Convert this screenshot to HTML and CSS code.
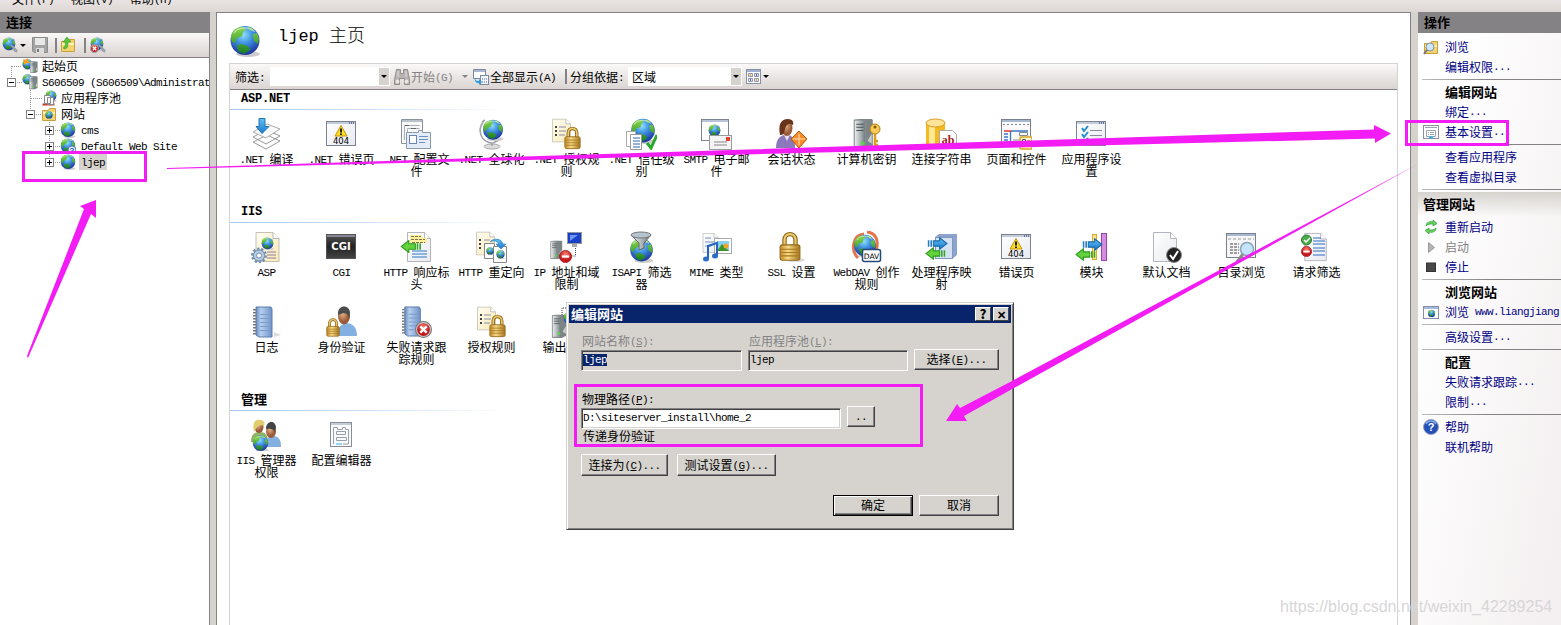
FILE: index.html
```html
<!DOCTYPE html>
<html lang="zh-CN">
<head>
	<meta charset="utf-8">
	<title>ljep 主页</title>
	<link rel="stylesheet" href="styles.css">
</head>
<body>

<!-- icon set -->
<svg class="defs" width="0" height="0">
	<defs>
		<radialGradient id="sea" cx="45%" cy="30%" r="70%"><stop offset="0" stop-color="#8fe0f8"/><stop offset=".45" stop-color="#3d8fe0"/><stop offset="1" stop-color="#1c329c"/></radialGradient>
		<linearGradient id="land" x2="0" y2="1"><stop offset="0" stop-color="#8ad84c"/><stop offset="1" stop-color="#167c24"/></linearGradient>
		<linearGradient id="gold" x2="1" y2="0"><stop offset="0" stop-color="#c48a28"/><stop offset=".4" stop-color="#f6dc88"/><stop offset="1" stop-color="#a8741c"/></linearGradient>
		<linearGradient id="steel" x2="1" y2="0"><stop offset="0" stop-color="#eef0f0"/><stop offset=".5" stop-color="#b4babc"/><stop offset="1" stop-color="#6c7478"/></linearGradient>
		<linearGradient id="page" x2="1" y2="1"><stop offset="0" stop-color="#fff"/><stop offset="1" stop-color="#e9eaf0"/></linearGradient>
		<linearGradient id="cream" x2="1" y2="1"><stop offset="0" stop-color="#fffef4"/><stop offset="1" stop-color="#f9e9b4"/></linearGradient>
		<linearGradient id="book" x2="1" y2="0"><stop offset="0" stop-color="#668cc0"/><stop offset=".3" stop-color="#b8d0ee"/><stop offset="1" stop-color="#6e94c8"/></linearGradient>
		<linearGradient id="blue" x2="0" y2="1"><stop offset="0" stop-color="#62c0f4"/><stop offset="1" stop-color="#1878cc"/></linearGradient>
		<linearGradient id="black" x2="0" y2="1"><stop offset="0" stop-color="#555"/><stop offset=".5" stop-color="#222"/><stop offset="1" stop-color="#444"/></linearGradient>
		<radialGradient id="red" cy="30%"><stop offset="0" stop-color="#f88070"/><stop offset="1" stop-color="#c4161c"/></radialGradient>
		<radialGradient id="head" cx="40%" cy="35%"><stop offset="0" stop-color="#e8b488"/><stop offset="1" stop-color="#985a38"/></radialGradient>
	</defs>

	<symbol id="globe" viewBox="0 0 32 32">
		<ellipse cx="19" cy="29" rx="12" ry="3" fill="#ccc"/>
		<circle cx="16" cy="15.500" r="14.500" fill="url(#sea)"/>
		<path d="M2 13C2 7 6 2 13 2l4 2-3 3-1 4-5 2-2 5-3-1zM18 2c3 0 5 1 7 3l-3 1zM24 9l4-1 2 6-1 5-4-3-1-4zM8 20l5-1 7 3 1 3-6 4-6-3z" fill="url(#land)"/>
		<path d="M5 8C9 2 20 1 26 7" stroke="#fff" stroke-width="1.500" fill="none" opacity=".45"/>
	</symbol>
	<symbol id="lock" viewBox="0 0 20 28">
		<path d="M5 14V8c0-7 10-7 10 0v6" fill="none" stroke="#8c6414" stroke-width="4"/>
		<path d="M5 14V8c0-7 10-7 10 0v6" fill="none" stroke="#eacb70" stroke-width="2"/>
		<rect x="1" y="12.500" width="18" height="14" rx="2" fill="url(#gold)" stroke="#96691a"/>
		<path d="M2 16.500h16M2 19.500h16M2 22.500h16" stroke="#a9781f"/>
	</symbol>
	<symbol id="window" viewBox="0 0 32 32">
		<rect x="1.500" y="3.500" width="29" height="24" fill="url(#page)" stroke="#7c8494"/>
		<path d="M2 5h28" stroke="#c4ccda" stroke-width="2"/><path d="M24 5h1m1 0h1m1 0h1" stroke="#445a90" stroke-width="1.500"/>
	</symbol>
	<symbol id="sheet" viewBox="0 0 26 32">
		<path d="M1.500 1.500h17l6 6v23h-23z" fill="url(#page)" stroke="#b4b4bc"/><path d="M18.500 1.500v6h6" fill="#fff" stroke="#b4b4bc"/>
	</symbol>
	<symbol id="creamsheet" viewBox="0 0 26 32">
		<path d="M1.500 1.500h17l6 6v23h-23z" fill="url(#cream)" stroke="#c4bfae"/><path d="M18.500 1.500v6h6" fill="#fff" stroke="#b4b4bc"/>
	</symbol>
	<symbol id="server" viewBox="0 0 20 30">
		<path d="M1 2l5-1h12l1 1v25l-6 3H1z" fill="#7c8486"/><rect x="1" y="2" width="11" height="27" fill="url(#steel)" stroke="#868e90"/>
		<path d="M3 6h7M3 9h7M3 12h7" stroke="#4a5458"/><path d="M14 22l4-7v10z" fill="#c8cccc"/><rect x="8" y="23" width="3" height="3" fill="#4ce038"/>
	</symbol>
	<symbol id="stop" viewBox="0 0 14 14"><circle cx="7" cy="7" r="6.500" fill="url(#red)" stroke="#a42020"/><path d="M3 7h8" stroke="#fff" stroke-width="2.500"/></symbol>
	<symbol id="cross" viewBox="0 0 16 16"><circle cx="8" cy="8" r="7.500" fill="#c8c8c8" stroke="#777"/><circle cx="8" cy="8" r="6" fill="url(#red)"/><path d="M5 5l6 6m0-6l-6 6" stroke="#fff" stroke-width="2.200"/></symbol>
	<symbol id="toright" viewBox="0 0 20 12"><path d="M6 3.500h6v-3l7 5.500-7 5.500v-3H6z" fill="url(#blue)" stroke="#1767a8"/><path d="M1.500 3v6M4 3v6" stroke="#247cc4" stroke-width="1.500"/></symbol>
	<symbol id="toleft" viewBox="0 0 20 12"><path d="M14 3.500H8v-3L1 6l7 5.500v-3h6z" fill="#64d23c" stroke="#2c9a1c"/><path d="M16 3v6M18.500 3v6" stroke="#37a824" stroke-width="1.500"/></symbol>

	<symbol id="i-compile" viewBox="0 0 32 32">
		<path d="M3 24l14-7 13 6-14 8zM3 19l14-7 13 6-14 8z" fill="#fff" stroke="#999"/>
		<path d="M3 14l14-8 13 5-14 9z" fill="#fafafa" stroke="#aaa"/>
		<path d="M9 .500h6v8h4l-7 7-6-7h3z" fill="url(#blue)" stroke="#2474b4"/>
	</symbol>
	<symbol id="i-404" viewBox="0 0 32 32">
		<use href="#window"/><path d="M16 7.500l6 10.500H10z" fill="#ffdc28" stroke="#c49408" stroke-linejoin="round"/><path d="M16 10.500v4m0 1V17" stroke="#222" stroke-width="2"/>
		<text x="16" y="26" class="t404">404</text>
	</symbol>
	<symbol id="i-config" viewBox="0 0 32 32">
		<path d="M1.500 1.500h21v24h-21z" fill="#f8f8f8" stroke="#8c929c"/><path d="M2 3h20" stroke="#b8c0cc" stroke-width="2"/><path d="M4.500 22V7.500h15M7.500 22V10.500h12" fill="none" stroke="#a8b0bc"/><path d="M5 7.500h4M11 10.500h5" stroke="#666"/>
		<path d="M12.500 14.500h6v-2h4v2h8v16H6.500v-16z" fill="#e4ecf8" stroke="#8c98ac"/><rect x="9.500" y="17.500" width="7" height="8" fill="#fff" stroke="#6484bc"/><path d="M19 18.500h9M19 21.500h9M19 24.500h6" stroke="#7090c4"/>
	</symbol>
	<symbol id="i-world" viewBox="0 0 32 32">
		<ellipse cx="17" cy="28.500" rx="8" ry="2.500" fill="#dcdcdc" stroke="#aaa"/><path d="M8 4C2 13 6 24 17 25v3M7 4l3-2M24 22l-6 3" fill="none" stroke="#a0a4a8" stroke-width="1.600"/>
		<use href="#globe" x="7" y="1" width="22" height="22"/>
	</symbol>
	<symbol id="i-auth" viewBox="0 0 32 32">
		<use href="#creamsheet" x="1" y="0" width="21" height="25"/><path d="M9 9h7M9 13h7M9 17h6" stroke="#8c8cac"/><path d="M5 9h2M5 13h2M5 17h2" stroke="#444" stroke-width="2"/>
		<use href="#lock" x="14" y="8" width="17" height="24"/>
	</symbol>
	<symbol id="i-trust" viewBox="0 0 32 32">
		<use href="#globe" x="5" y="0" width="26" height="26"/><path d="M1.500 13.500h9v15h-9z" fill="#fff" stroke="#aaa"/><path d="M5.500 16.500h11v15h-11z" fill="#fff" stroke="#999"/><path d="M8 20h7m-7 3h7m-7 3h7m-7 3h7" stroke="#2868b8"/>
		<path d="M22 25l4 5 6-13" fill="none" stroke="#2ca82c" stroke-width="3"/>
	</symbol>
	<symbol id="i-smtp" viewBox="0 0 32 32">
		<rect x="1.500" y="1.500" width="27" height="21" fill="#fff" stroke="#7c8494"/><path d="M2 3h26" stroke="#b8c4d8" stroke-width="2"/><use href="#globe" x="8" y="6" width="13" height="13"/>
		<rect x="9.500" y="17.500" width="22" height="14" fill="#f4f4f4" stroke="#999"/><path d="M14 24h13m-13 3h13" stroke="#888"/><rect x="26" y="19" width="4" height="4" fill="#e44030"/>
	</symbol>
	<symbol id="i-session" viewBox="0 0 32 32">
		<path d="M1 30c0-9 4-12 8-13h5c5 2 6 6 6 13z" fill="#8c78bc"/><path d="M9 17l3 6 3-6z" fill="#e8e0f4"/><ellipse cx="12" cy="10" rx="5.500" ry="8" fill="url(#head)"/><path d="M5 17C3 6 6 1 13 1c5 0 6 4 5 6-4-3-7 0-8 4-1 5-2 6-5 6z" fill="#68341c"/>
		<path d="M24 13l8 8-8 9-8-9z" fill="#f88c28" stroke="#bc5408"/><path d="M24 16v11M18 21h12" stroke="#ffe4b8"/>
	</symbol>
	<symbol id="i-key" viewBox="0 0 32 32">
		<use href="#server" x="3" y="0" width="21" height="31"/><circle cx="25" cy="11" r="5" fill="#f8cc58" stroke="#b87c10"/><circle cx="25" cy="9" r="1.500" fill="#845808"/><path d="M25 15v14m0-6h3m-3 4h3" stroke="#d89c24" stroke-width="2.500"/>
	</symbol>
	<symbol id="i-conn" viewBox="0 0 32 32">
		<path d="M1 5v23c0 4 19 4 19 0V5z" fill="#f8b820"/><path d="M4 7v22c2 1 4 2 6 2V8z" fill="#ffe898"/><ellipse cx="10.500" cy="5" rx="9.500" ry="4" fill="#ffe498" stroke="#d89c20"/>
		<path d="M14.500 12.500h13l4 4v14h-17z" fill="#fff" stroke="#aaa"/><text x="23" y="26" class="tab">ab</text>
	</symbol>
	<symbol id="i-pages" viewBox="0 0 32 32">
		<rect x="1.500" y="1.500" width="29" height="27" fill="#fafafa" stroke="#788090"/><path d="M2 3h28" stroke="#a8b8d0" stroke-width="2"/><path d="M3 6.500h26" stroke="#888" stroke-dasharray="2 2"/><path d="M4 13h8" stroke="#e43030" stroke-width="1.500"/><path d="M12 13h16M10.500 13v15M4 16h4m-4 3h4m-4 3h4" stroke="#3878cc" stroke-width="1.300"/><path d="M13 22h6m-6 3h6M19.500 14.500h8v3h-8z" fill="none" stroke="#888"/>
		<rect x="20" y="19" width="12" height="12" rx="1" fill="#fff8d0" stroke="#d8a820" stroke-width="1.500"/><path d="M22.500 21.500h3v5h-3zM27 23h3" fill="none" stroke="#555"/>
	</symbol>
	<symbol id="i-settings" viewBox="0 0 32 32"><use href="#window"/><path d="M7 10l2 3 4-5M7 16l2 3 4-5M7 22l2 3 4-5" fill="none" stroke="#2890d0" stroke-width="2"/><path d="M15 12.500h12m-12 5h12m-12 6h12" stroke="#888c98"/></symbol>

	<symbol id="i-asp" viewBox="0 0 32 32">
		<use href="#creamsheet" x="4.500" y="0" width="26" height="32"/><use href="#globe" x="11" y="6" width="13" height="13"/><path d="M17 21h9m-9 3h9m-9 3h9" stroke="#8c7c9c"/>
		<circle cx="9" cy="24.500" r="6.500" fill="#b4cce4" stroke="#7890ac" stroke-dasharray="2.200 1.800" stroke-width="3"/><circle cx="9" cy="24.500" r="5.500" fill="#b4cce4" stroke="#7890ac"/><circle cx="9" cy="24.500" r="2.500" fill="#fff" stroke="#7890ac"/>
	</symbol>
	<symbol id="i-cgi" viewBox="0 0 32 32"><rect x="1.500" y="3.500" width="29" height="24" fill="url(#black)" stroke="#555"/><path d="M2 5h28" stroke="#889" stroke-width="2"/><text x="16" y="19" class="tcgi">CGI</text></symbol>
	<symbol id="i-header" viewBox="0 0 32 32"><use href="#sheet" x="6" y="0" width="26" height="32"/><path d="M10 4h12v3h5v5H10z" fill="#fff09c"/><path d="M11 5.500h10M11 8.500h14M12 11.500h13" stroke="#7c7448" stroke-dasharray="3 1"/><path d="M12 20h15m-15 3h15m-15 3h15" stroke="#2878c8"/><use href="#toleft" x="0" y="9" width="22" height="13"/></symbol>
	<symbol id="i-redirect" viewBox="0 0 32 32"><use href="#creamsheet" x="0" y="0" width="21" height="25"/><path d="M9 9h6M9 13h4M9 17h3" stroke="#8c8cac"/><path d="M4 9h2M4 13h2M4 17h2" stroke="#444" stroke-width="2"/><path d="M9.500 12.500h10v15h-10z" fill="#fff" stroke="#888"/><path d="M18.500 15.500h13v16h-13z" fill="#fff" stroke="#888"/><use href="#globe" x="11" y="16" width="8" height="8"/><use href="#globe" x="21" y="19" width="9" height="9"/><path d="M15 11c4-5 12-3 13 2h3l-5 5-5-5h3c-2-3-5-4-9-2z" fill="url(#blue)" stroke="#1c70b4" stroke-width=".5"/></symbol>
	<symbol id="i-ip" viewBox="0 0 32 32"><use href="#server" x="0" y="9" width="13" height="19"/><rect x="17.500" y="1.500" width="14" height="11" fill="#1840c8" stroke="#999"/><path d="M20 4l8 0-8 6z" fill="#6c98f4"/><path d="M22 13h5v3h-5z" fill="#aaa"/><path d="M25.500 17v8H20" fill="none" stroke="#444" stroke-dasharray="1 1"/><use href="#stop" x="9" y="19" width="13" height="13"/></symbol>
	<symbol id="i-isapi" viewBox="0 0 32 32"><use href="#globe" x="4" y="7" width="25" height="25"/><path d="M6 4l8 8v7l5-2v-5l7-8z" fill="url(#steel)" stroke="#666"/><ellipse cx="16" cy="4" rx="10" ry="3" fill="#b4c4d0" stroke="#777"/></symbol>
	<symbol id="i-mime" viewBox="0 0 32 32"><use href="#sheet" x="2" y="0" width="17" height="24"/><path d="M5 7h6m-6 4h9m-9 4h6" stroke="#7494c4"/><rect x="14.500" y="7.500" width="17" height="15" fill="#fff" stroke="#aaa"/><path d="M17 10h12v10H17z" fill="#8cd0f0"/><path d="M17 20l5-7 7 7z" fill="#3c9428"/><circle cx="26" cy="15" r="2.500" fill="#f0a428"/><path d="M8 28V15l9-3v12" fill="none" stroke="#2464c0" stroke-width="2"/><ellipse cx="6" cy="28" rx="3" ry="2.500" fill="#2c6cc8"/><ellipse cx="15" cy="25" rx="3" ry="2.500" fill="#2c6cc8"/></symbol>
	<symbol id="i-ssl" viewBox="0 0 32 32"><ellipse cx="20" cy="29" rx="10" ry="2" fill="#ddd"/><use href="#lock" x="4" y="0" width="22" height="31"/></symbol>
	<symbol id="i-dav" viewBox="0 0 32 32"><path d="M8 27C0 19 3 4 14 3M17 1c12 1 12 15 7 20" fill="none" stroke="#e4744c" stroke-width="3"/><use href="#globe" x="3" y="3" width="24" height="24"/><rect x="12.500" y="18.500" width="18" height="12" rx="2" fill="#fff" stroke="#234a7a" stroke-width="1.500"/><text x="21.500" y="27.500" class="tdav">DAV</text></symbol>
	<symbol id="i-handler" viewBox="0 0 32 32"><path d="M10 6l4-3h18v21l-5 4H10z" fill="#8ca4cc"/><rect x="10.500" y="6.500" width="17" height="21" fill="#d4e2f4" stroke="#8098c0"/><use href="#toright" x="2" y="6" width="21" height="13"/><use href="#toleft" x="0" y="16" width="21" height="13"/></symbol>
	<symbol id="i-module" viewBox="0 0 32 32"><rect x="17.500" y="3.500" width="4" height="25" fill="#fce48c" stroke="#d8a830"/><rect x="26.500" y="2.500" width="5" height="27" fill="#d48ce0" stroke="#9c44ac"/><use href="#toright" x="7" y="7" width="21" height="13"/><use href="#toleft" x="0" y="17" width="21" height="13"/></symbol>
	<symbol id="i-default" viewBox="0 0 32 32"><use href="#sheet" x="2" y="0" width="26" height="32"/><circle cx="24" cy="24" r="7.500" fill="#222" stroke="#888"/><path d="M20 24l3 4 5-8" fill="none" stroke="#fff" stroke-width="2"/></symbol>
	<symbol id="i-browse" viewBox="0 0 32 32"><rect x="1.500" y="2.500" width="29" height="24" fill="#f6f6f8" stroke="#788090"/><path d="M2 4h28" stroke="#a8b8d0" stroke-width="2"/><path d="M3 8h26" stroke="#999" stroke-dasharray="3 2"/><path d="M5 13h9m-9 3h9m-9 3h9m-9 3h9" stroke="#444" stroke-dasharray="3 1"/><path d="M18 23l-6 8" stroke="#888" stroke-width="3"/><circle cx="22" cy="18" r="6.500" fill="#c4e4fc" stroke="#8ca4b8" stroke-width="1.500"/></symbol>
	<symbol id="i-request" viewBox="0 0 32 32"><use href="#sheet" x="3" y="1" width="25" height="30"/><path d="M13 7h8m-8 3h12m-12 3h12m-12 4h12m-12 3h12m-12 4h12" stroke="#2c6cc4"/><circle cx="6.500" cy="9" r="5" fill="#48ac48" stroke="#2c7c2c"/><path d="M4 9l2 2 4-4" stroke="#fff" stroke-width="1.500" fill="none"/><use href="#stop" x="1" y="15" width="11" height="11"/></symbol>
	<symbol id="i-log" viewBox="0 0 32 32"><path d="M24 26l7 3-7 2z" fill="#ddd"/><path d="M6 1h15l1 2v28H9l-3-2z" fill="url(#book)" stroke="#5c7cac"/><path d="M10 8.500h10m-10 4h10m-10 4h10m-10 4h10m-10 4h10" stroke="#7c9ccc"/><path d="M4.500 3v27" stroke="#777" stroke-width="3" stroke-dasharray="1.500 1.500"/></symbol>
	<symbol id="i-identity" viewBox="0 0 32 32"><path d="M12 30c0-9 5-12 9-13 7 0 11 5 11 13z" fill="#82b0e2"/><ellipse cx="19" cy="10" rx="6" ry="8.500" fill="url(#head)"/><path d="M13 9C12-2 25-2 25 7l-1 6c-1-6-4-7-11-4z" fill="#4c4c4c"/><use href="#lock" x="1" y="11" width="14" height="21"/></symbol>
	<symbol id="i-failed" viewBox="0 0 32 32"><use href="#i-log" x="-1" y="0" width="31" height="31"/><use href="#cross" x="15" y="15" width="17" height="17"/></symbol>
	<symbol id="i-output" viewBox="0 0 32 32"><use href="#server" x="1" y="8" width="17" height="24"/><path d="M12 9V2h12" fill="none" stroke="#444" stroke-dasharray="1 1"/><use href="#globe" x="13" y="5" width="15" height="15"/></symbol>
	<symbol id="i-users" viewBox="0 0 32 32"><path d="M1 23c0-8 4-10 9-10s8 3 8 10z" fill="#8cb464"/><ellipse cx="9" cy="8" rx="4.500" ry="6" fill="url(#head)"/><path d="M4 13C2 4 5 0 10 1c5 0 5 4 4 6-5-2-7 1-10 6z" fill="#e4cc70"/><path d="M15 28c0-9 4-11 8-11 6 0 8 4 8 11z" fill="#84b0e0"/><ellipse cx="21" cy="12" rx="5" ry="7" fill="url(#head)"/><path d="M16 10c0-9 10-9 10-1l-2 4c0-3-3-4-8-3z" fill="#444"/><use href="#globe" x="2" y="16" width="17" height="17"/></symbol>
	<symbol id="i-editor" viewBox="0 0 32 32"><rect x="5.500" y="3.500" width="21" height="24" fill="#fafbfc" stroke="#888c98"/><path d="M6 5h20" stroke="#c4ccd8" stroke-width="2"/><path d="M8.500 25V8.500h4v2h5v-2h3v2h3V25M11.500 12.500h9v3h-9zM11.500 18.500h10v3h-10z" fill="none" stroke="#98a0ac"/><path d="M11 25h6" stroke="#30b4e8"/><path d="M18 25h5" stroke="#999"/></symbol>

	<symbol id="s-connect" viewBox="0 0 16 16"><use href="#globe" width="14" height="14"/><path d="M9 8l5 5-2 1M11 11l4 4" fill="none" stroke="#98a0a8" stroke-width="2"/></symbol>
	<symbol id="s-save" viewBox="0 0 16 16"><path d="M.500 .500h15v15H2l-1.500-1.500z" fill="#a4a4a4" stroke="#8c8c8c"/><path d="M3 1h10v7H3z" fill="#e8e8e8"/><path d="M4 11h8v5H4z" fill="#ddd"/><path d="M5 12h2v3H5z" fill="#777"/></symbol>
	<symbol id="s-folder" viewBox="0 0 16 16"><path d="M1.500 4.500h6l1-2h6v12h-13z" fill="#f4d470" stroke="#c8a03c"/><path d="M2 7h12" stroke="#fff0b4" stroke-width="2"/></symbol>
	<symbol id="s-start" viewBox="0 0 16 16"><use href="#globe" x="0" y="1" width="11" height="11"/><path d="M1 1l3 1 2-2 0 3 3 2-4 0-3 2 0-3z" fill="#f8a420"/><use href="#server" x="8" y="2" width="8" height="14"/></symbol>
	<symbol id="s-pool" viewBox="0 0 16 16"><use href="#globe" x="4" y="0" width="12" height="12"/><path d="M1.500 14.500h12" stroke="#c83c34" stroke-width="2"/><path d="M3.500 5.500h6v8h-6zM6.500 7.500h6v7h-6z" fill="#fff" stroke="#888"/></symbol>
	<symbol id="s-binoc" viewBox="0 0 16 16"><path d="M2.500 .500h4v4h3v-4h4l1 5 1 5v5h-5v-6h-5v6h-5v-5l1-5z" fill="#b8b4b4" stroke="#908c8c"/><path d="M4 2v6M12 2v6" stroke="#e0dcdc"/><circle cx="3.500" cy="12.500" r="2" fill="#e8e4e4"/><circle cx="12.500" cy="12.500" r="2" fill="#e8e4e4"/></symbol>
	<symbol id="s-showall" viewBox="0 0 16 16"><path d="M.500 .500h12v9H.500z" fill="#fff" stroke="#7c88a0"/><path d="M1 2h11" stroke="#a8b8d0" stroke-width="2"/><rect x="7.500" y="6.500" width="8" height="9" fill="#f4f8ff" stroke="#7c88a0"/><path d="M9 10h5m-5 3h5" stroke="#3c60b0" stroke-dasharray="1 1"/><path d="M2 8c0 4 2 4 4 4v-2l3 3-3 3v-2c-3 0-5-2-4-6z" fill="#2c98e0"/></symbol>
	<symbol id="s-grid" viewBox="0 0 16 16"><rect x=".500" y=".500" width="14" height="14" fill="#fff" stroke="#8490a8"/><path d="M1 2h13" stroke="#a0b0d0" stroke-width="2"/><path d="M2.500 4.500h4v3h-4zM8.500 4.500h4v3h-4zM2.500 9.500h4v3h-4zM8.500 9.500h4v3h-4z" fill="#f8e4c8" stroke="#8c98b4"/><path d="M4 6h1M10 11h1" stroke="#e8a048" stroke-width="2"/><path d="M4 11h1M10 6h1" stroke="#4868d8" stroke-width="2"/></symbol>
	<symbol id="s-restart" viewBox="0 0 16 16"><path d="M3 7c0-4 4-5 7-4V1l4 3.500L10 7V5C7 5 5 5 3 7zM13 9c0 4-4 5-7 4v2l-4-3.500L6 9v2c3 0 5 0 7-2z" fill="#6cd060" stroke="#2c9c34" stroke-width=".7"/></symbol>
	<symbol id="s-find" viewBox="0 0 16 16"><use href="#s-folder" width="16" height="16"/><circle cx="7" cy="8" r="4" fill="#cce8fc" stroke="#8090a0"/><path d="M4 11l-3 4" stroke="#777" stroke-width="2"/></symbol>
	<symbol id="s-help" viewBox="0 0 16 16"><circle cx="8" cy="8" r="7.500" fill="#2450b8" stroke="#98a4bc"/><path d="M3 5c2-4 8-4 10 0" stroke="#88a8ec" stroke-width="1.500" fill="none"/><text x="8" y="12" class="thelp">?</text></symbol>
</svg>

<div class="menubar">
	<span>文件<i>(F)</i></span><span>视图<i>(V)</i></span><span>帮助<i>(H)</i></span>
</div>

<div class="app">

	<div class="connections">
		<div class="panel-title">连接</div>
		<div class="tools">
			<svg class="s16"><use href="#s-connect"/></svg><b class="drop"></b>
			<svg class="s16 save"><use href="#s-save"/></svg><b class="sep"></b>
			<svg class="s16"><use href="#s-folder"/><path d="M5 12c3-1 3-4 3-7h3L7 0 3 5h2c1 3 0 5-2 6z" fill="#58c43c" stroke="#31902a" stroke-width=".5"/></svg><b class="sep"></b>
			<svg class="s16"><use href="#s-connect"/><use href="#cross" x="0" y="7" width="9" height="9"/></svg>
		</div>
		<div class="tree">
			<svg class="lines" width="80" height="120"><path d="M11.500 8v16M12 8.500h10M17 24.500h6M30.500 32v19M31 40.500h11M36 56.500h6M49.500 64v36M55 72.500h5M55 88.500h5M55 104.500h5"/></svg>
			<div class="node l0"><b class="nobox"></b><svg class="s16"><use href="#s-start"/></svg><span>起始页</span></div>
			<div class="node l0"><b class="box minus"></b><svg class="s16"><use href="#globe" width="11" height="11"/><use href="#server" x="7" y="1" width="9" height="15"/></svg><span><i>S606509 (S606509\Administrator)</i></span></div>
			<div class="node l1"><b class="nobox"></b><svg class="s16"><use href="#s-pool"/></svg><span>应用程序池</span></div>
			<div class="node l1"><b class="box minus"></b><svg class="s16"><use href="#s-folder"/><use href="#globe" x="4" y="5" width="8" height="8"/></svg><span>网站</span></div>
			<div class="node l2"><b class="box"></b><svg class="s16"><use href="#globe"/></svg><span><i>cms</i></span></div>
			<div class="node l2"><b class="box"></b><svg class="s16"><use href="#globe"/><circle cx="12" cy="12" r="4" fill="#e8eef8" stroke="#5878b8"/><text x="12" y="15" class="tq">?</text></svg><span><i>Default Web Site</i></span></div>
			<div class="node l2"><b class="box"></b><svg class="s16"><use href="#globe"/></svg><span class="selected"><i>ljep</i></span></div>
		</div>
	</div>

	<div class="home">
		<div class="home-title"><svg width="32" height="34"><use href="#globe" width="32" height="34"/></svg><h1><i>ljep </i>主页</h1></div>
		<div class="features">
			<div class="filterbar">
				<span>筛选<i>:</i></span>
				<div class="combo filter"><b class="arrow"></b></div>
				<svg class="s16"><use href="#s-binoc"/></svg>
				<span class="gray go">开始<i>(G)</i></span><b class="drop gray"></b>
				<svg class="s16"><use href="#s-showall"/></svg>
				<span class="all">全部显示<i>(A)</i></span><b class="sep"></b>
				<span>分组依据<i>:</i></span>
				<div class="combo group-by">区域<b class="arrow"></b></div>
				<svg class="s16"><use href="#s-grid"/></svg><b class="drop"></b>
			</div>

			<div class="group">
				<h2><i>ASP.NET</i></h2>
				<div class="items">
					<div class="item"><svg><use href="#i-compile"/></svg><i>.NET </i>编译</div>
					<div class="item"><svg><use href="#i-404"/></svg><i>.NET </i>错误页</div>
					<div class="item"><svg><use href="#i-config"/></svg><i>.NET </i>配置文<br>件</div>
					<div class="item"><svg><use href="#i-world"/></svg><i>.NET </i>全球化</div>
					<div class="item"><svg><use href="#i-auth"/></svg><i>.NET </i>授权规<br>则</div>
					<div class="item"><svg><use href="#i-trust"/></svg><i>.NET </i>信任级<br>别</div>
					<div class="item"><svg><use href="#i-smtp"/></svg><i>SMTP </i>电子邮<br>件</div>
					<div class="item"><svg><use href="#i-session"/></svg>会话状态</div>
					<div class="item"><svg><use href="#i-key"/></svg>计算机密钥</div>
					<div class="item"><svg><use href="#i-conn"/></svg>连接字符串</div>
					<div class="item"><svg><use href="#i-pages"/></svg>页面和控件</div>
					<div class="item"><svg><use href="#i-settings"/></svg>应用程序设<br>置</div>
				</div>
			</div>

			<div class="group">
				<h2><i>IIS</i></h2>
				<div class="items">
					<div class="item"><svg><use href="#i-asp"/></svg><i>ASP</i></div>
					<div class="item"><svg><use href="#i-cgi"/></svg><i>CGI</i></div>
					<div class="item"><svg><use href="#i-header"/></svg><i>HTTP </i>响应标<br>头</div>
					<div class="item"><svg><use href="#i-redirect"/></svg><i>HTTP </i>重定向</div>
					<div class="item"><svg><use href="#i-ip"/></svg><i>IP </i>地址和域<br>限制</div>
					<div class="item"><svg><use href="#i-isapi"/></svg><i>ISAPI </i>筛选<br>器</div>
					<div class="item"><svg><use href="#i-mime"/></svg><i>MIME </i>类型</div>
					<div class="item"><svg><use href="#i-ssl"/></svg><i>SSL </i>设置</div>
					<div class="item"><svg><use href="#i-dav"/></svg><i>WebDAV </i>创作<br>规则</div>
					<div class="item"><svg><use href="#i-handler"/></svg>处理程序映<br>射</div>
					<div class="item"><svg><use href="#i-404"/></svg>错误页</div>
					<div class="item"><svg><use href="#i-module"/></svg>模块</div>
					<div class="item"><svg><use href="#i-default"/></svg>默认文档</div>
					<div class="item"><svg><use href="#i-browse"/></svg>目录浏览</div>
					<div class="item"><svg><use href="#i-request"/></svg>请求筛选</div>
					<div class="item"><svg><use href="#i-log"/></svg>日志</div>
					<div class="item"><svg><use href="#i-identity"/></svg>身份验证</div>
					<div class="item"><svg><use href="#i-failed"/></svg>失败请求跟<br>踪规则</div>
					<div class="item"><svg><use href="#i-auth"/></svg>授权规则</div>
					<div class="item"><svg><use href="#i-output"/></svg>输出缓存</div>
				</div>
			</div>

			<div class="group">
				<h2>管理</h2>
				<div class="items">
					<div class="item"><svg><use href="#i-users"/></svg><i>IIS </i>管理器<br>权限</div>
					<div class="item"><svg><use href="#i-editor"/></svg>配置编辑器</div>
				</div>
			</div>
		</div>
	</div>

	<div class="actions">
		<div class="panel-title">操作</div>
		<div class="list">
			<a><svg class="s16"><use href="#s-find"/></svg>浏览</a>
			<a>编辑权限<i>...</i></a>
			<hr>
			<h3>编辑网站</h3>
			<a>绑定<i>...</i></a>
			<a><svg class="s16"><rect x=".5" y="1.500" width="15" height="13" fill="#fff" stroke="#8c90a0"/><path d="M2 3.500h12M3.500 6.500h9v6h-9zM5 8.500h1m1 0h4M5 10.500h1m1 0h4" fill="none" stroke="#9ca4b4"/><path d="M6 13.500h4" stroke="#30b4e8" stroke-width="2"/></svg>基本设置<i>...</i></a>
			<hr>
			<a>查看应用程序</a>
			<a>查看虚拟目录</a>
			<hr>
		</div>
		<div class="subtitle">管理网站</div>
		<div class="list manage">
			<a><svg class="s16"><use href="#s-restart"/></svg>重新启动</a>
			<a class="off"><svg class="s16"><path d="M5.500 3.500l6 5-6 5z" fill="#b4b4b4" stroke="#989898"/></svg>启动</a>
			<a><svg class="s16"><rect x="3.500" y="4" width="9" height="8.500" fill="#484848" stroke="#333"/></svg>停止</a>
			<hr>
			<h3>浏览网站</h3>
			<a><svg class="s16"><rect x=".5" y="2.500" width="15" height="12" fill="#fff" stroke="#8490a8"/><path d="M1 4h14" stroke="#a8b8d8" stroke-width="2"/><use href="#globe" x="4.500" y="5.500" width="8" height="8"/></svg>浏览<i> www.liangjiang</i></a>
			<hr>
			<a>高级设置<i>...</i></a>
			<hr>
			<h3>配置</h3>
			<a>失败请求跟踪<i>...</i></a>
			<a>限制<i>...</i></a>
			<hr>
			<a><svg class="s16"><use href="#s-help"/></svg>帮助</a>
			<a>联机帮助</a>
		</div>
	</div>
</div>

<div class="dialog">
	<div class="caption"><span>编辑网站</span><b>?</b><b>✕</b></div>
	<div class="dialog-body">
		<div class="row names">
			<div class="field name"><label>网站名称<i>(<u>S</u>):</i></label><div class="input off"><i class="hl">ljep</i></div></div>
			<div class="field pool"><label>应用程序池<i>(<u>L</u>):</i></label><div class="input off"><i>ljep</i></div></div>
			<div class="button choose">选择<i>(<u>E</u>)...</i></div>
		</div>
		<div class="row path">
			<div class="field"><label>物理路径<i>(<u>P</u>):</i></label><div class="input"><i>D:\siteserver_install\home_2</i></div></div>
			<div class="button dots"><i>..</i></div>
		</div>
		<div class="pass">传递身份验证</div>
		<div class="row tests">
			<div class="button connect-as">连接为<i>(<u>C</u>)...</i></div>
			<div class="button test">测试设置<i>(<u>G</u>)...</i></div>
		</div>
		<div class="row confirm">
			<div class="button ok">确定</div>
			<div class="button">取消</div>
		</div>
	</div>
</div>

<div class="watermark">https://blog.csdn.net/weixin_42289254</div>

<!-- notes drawn over the window -->
<svg class="marks" width="1561" height="625">
	<g class="frames"><rect x="23.500" y="152.500" width="122" height="28"/><rect x="575.500" y="385.500" width="346" height="60"/><rect x="1406.500" y="121.500" width="101" height="23"/></g>
	<path d="M167 168L1374 129.500V125L1391 133.500 1375 143V138.500L167 169z"/>
	<path d="M1418 164L1012 381 960 408 957 404 946 421 967 421 964 416 1014 388z"/>
	<path d="M27 356L84 209 80 206 96 200 96 218 91 214 28 358z"/>
</svg>

</body>
</html>
```

FILE: styles.css
```css
body {
	margin: 0;
	width: 1561px;
	height: 625px;
	overflow: hidden;
	position: relative;
	background: #d6d3ce;
	font: 12px/16px "Noto Sans CJK SC", sans-serif;
	color: #000;
}

/* half-width text, 6px for each letter */
i {
	font-family: "Liberation Mono", monospace;
	font-style: normal;
	font-size: 11px;
	line-height: 0;
	letter-spacing: -0.6px;
	white-space: pre;
	vertical-align: 1px;
}

svg { flex: none; display: block; }
.defs { position: absolute; }
.s16 { width: 16px; height: 16px; }
h1, h2, h3 { margin: 0; }

.menubar {
	height: 12px;
	display: flex;
	gap: 17px;
	padding-left: 12px;
	line-height: 0;
	background: linear-gradient(#e9e4e3, #dcd7d4);
	overflow: hidden;
}

.menubar span { width: 42px; margin-top: -1px; white-space: nowrap; }

.app {
	display: flex;
	height: 613px;
}

.panel-title {
	height: 21px;
	line-height: 20px;
	padding-left: 6px;
	background: #848284;
	font-weight: bold;
	font-size: 13px;
}

/* left panel */
.connections {
	width: 209px;
	border-right: 1px solid #848284;
	background: #fff;
	overflow: hidden;
}

.tools {
	height: 24px;
	display: flex;
	align-items: center;
	padding-left: 2px;
	background: linear-gradient(#fbf8f8, #d9d4d1);
	border-bottom: 1px solid #848284;
}

.drop {
	width: 0;
	height: 0;
	border: 3px solid transparent;
	border-top-color: #000;
	border-bottom: 0;
}
.drop.gray { border-top-color: #848284; }
.tools .drop { margin: 0 6px 0 2px; }
.sep { width: 2px; height: 15px; background: #848284; }
.tools .sep { margin: 0 3px 0 7px; }
.tools .sep ~ .sep { margin-left: 8px; margin-right: 4px; }

.tree { position: relative; }
.lines { position: absolute; top: 0; left: 0; }
.lines path { fill: none; stroke: #999; stroke-dasharray: 1 1; }

.node {
	height: 16px;
	display: flex;
	align-items: center;
	white-space: nowrap;
}
.node span { margin-left: 4px; }
.l0 { padding-left: 7px; }
.l1 { padding-left: 26px; }
.l2 { padding-left: 45px; }
.l2 span { margin-left: 3px; padding: 0 2px; }

.box, .nobox { width: 9px; height: 9px; margin-right: 6px; flex: none; }
.box {
	box-sizing: border-box;
	border: 1px solid #848284;
	background:
		linear-gradient(#000, #000) center / 5px 1px no-repeat,
		linear-gradient(#000, #000) center / 1px 5px no-repeat,
		#fff;
	position: relative;
}
.minus { background: linear-gradient(#000, #000) center / 5px 1px no-repeat, #fff; }
.selected { background: #d6d3ce; }

/* middle */
.home {
	width: 1193px;
	margin-left: 6px;
	border: 1px solid #848284;
	border-bottom: 0;
	background: #fff;
	flex: none;
}

.home-title {
	height: 50px;
	display: flex;
	padding: 0 0 0 12px;
	box-sizing: border-box;
}
.home-title svg { margin-top: 11px; }
.home-title h1 {
	margin: 9px 0 0 17px;
	font-size: 18px;
	font-weight: 300;
	line-height: 24px;
}
.home-title i { font-size: 17px; letter-spacing: 0; }

.features {
	width: 1167px;
	height: 561px;
	margin-left: 12px;
	border: 1px solid #d6d3d6;
	border-bottom: 0;
}

.filterbar {
	height: 25px;
	display: flex;
	align-items: center;
	padding-left: 5px;
	background: linear-gradient(#fbf8f8, #dad5d2);
	border-bottom: 1px solid #848284;
	white-space: nowrap;
}
.combo {
	height: 17px;
	border: 1px solid #fff;
	background: #fff;
	display: flex;
	line-height: 18px;
}
.filter { width: 118px; margin: 0 4px 0 5px; }
.group-by { width: 109px; padding-left: 3px; margin: 0 4px 0 4px; }
.arrow {
	width: 10px;
	margin-left: auto;
	background: #d6d3ce;
	display: flex;
	align-items: center;
	justify-content: center;
}
.arrow::after {
	content: "";
	border: 3px solid transparent;
	border-top-color: #000;
	border-bottom: 0;
}
.gray { color: #848284; }
.go { margin-left: 1px; width: 51px; }
.filterbar .gray.drop { margin-right: 5px; }
.all { margin-left: 1px; width: 75px; }
.filterbar .sep { margin-right: 3px; }
.filterbar > .drop:last-child { margin-left: 1px; }

.group { margin-bottom: 10px; }
.group h2 {
	height: 19px;
	padding-left: 11px;
	font-size: 13px;
	line-height: 15px;
	border-bottom: 1px solid;
	border-image: linear-gradient(90deg, #a4c8f4, #d8e6fa 170px, #fff 280px) 1;
}
.group h2 i { font-size: 12px; letter-spacing: -0.2px; font-weight: bold; }

.items {
	display: flex;
	flex-wrap: wrap;
	padding-top: 8px;
	margin-left: -1px;
}
.item {
	width: 75px;
	height: 75px;
	line-height: 12px;
	text-align: center;
	white-space: nowrap;
}
.item svg { width: 32px; height: 32px; margin: 0 21px 3px; }

/* right panel */
.actions {
	width: 143px;
	margin-left: 7px;
	background: linear-gradient(100deg, #fff 20%, #f3eeef);
	overflow: hidden;
	flex: none;
}
.list { padding-top: 4px; }
.list.manage { padding-top: 0; }
.list a, .list h3 {
	display: flex;
	align-items: center;
	height: 20px;
	padding-left: 27px;
	color: #000084;
	white-space: nowrap;
}
.list a svg { margin: 0 6px 0 -22px; }
.list h3 { color: #000; font-size: 13px; }
.list a.off { color: #848284; }
.list hr {
	height: 1px;
	margin: 2px 0 2px 4px;
	border: 0;
	background: linear-gradient(90deg, #bbb, #848284 50%);
}
.subtitle {
	height: 25px;
	line-height: 23px;
	padding-left: 5px;
	font-weight: bold;
	font-size: 13px;
	background: linear-gradient(#d6d3ce, #fff0);
}

/* edit site dialog */
.dialog {
	position: absolute;
	left: 566px;
	top: 302px;
	width: 442px;
	height: 222px;
	padding: 2px;
	background: #d6d3ce;
	border: 1px solid;
	border-color: #d6d3ce #424142 #424142 #d6d3ce;
	box-shadow: inset 1px 1px #fff, inset -1px -1px #848284;
}
.caption {
	height: 18px;
	display: flex;
	align-items: center;
	padding: 0 2px;
	background: #08246b;
	color: #fff;
	font-weight: bold;
	font-size: 13px;
}
.caption span { flex: 1; }
.caption b {
	width: 14px;
	height: 12px;
	line-height: 12px;
	margin-left: 2px;
	text-align: center;
	color: #000;
	background: #d6d3ce;
	border: 1px solid;
	border-color: #fff #424142 #424142 #fff;
}
.caption b + b { font-size: 11px; }

.dialog-body { padding: 0 12px; }
.row { display: flex; }
.names { padding-top: 10px; align-items: flex-end; }
.name { width: 161px; margin-right: 6px; }
.pool { width: 160px; margin-right: 6px; }
.field label { display: block; height: 17px; padding-left: 1px; white-space: nowrap; }
.names label { color: #848284; }
.input {
	box-sizing: border-box;
	height: 21px;
	line-height: 16px;
	padding-left: 1px;
	background: #fff;
	border: 1px solid;
	border-color: #848284 #fff #fff #848284;
	box-shadow: inset 1px 1px #424142, inset -1px -1px #d6d3ce;
}
.input.off { background: #d6d3ce; }
.hl { background: #08246b; color: #fff; }

.button {
	box-sizing: border-box;
	width: 80px;
	height: 21px;
	line-height: 18px;
	text-align: center;
	border: 1px solid;
	border-color: #fff #424142 #424142 #fff;
	box-shadow: inset -1px -1px #848284;
}
.choose { width: 85px; margin-bottom: 1px; }
.path { padding-top: 20px; align-items: flex-end; }
.path .field { width: 260px; margin-right: 6px; }
.dots { width: 28px; margin-bottom: 2px; }
.pass { padding-left: 2px; height: 15px; line-height: 13px; }
.tests { padding-top: 10px; gap: 9px; }
.tests .button { height: 22px; line-height: 19px; }
.connect-as { width: 87px; }
.test { width: 99px; }
.confirm { padding-top: 19px; gap: 6px; justify-content: flex-end; }
.ok { border: 1px solid #000; box-shadow: inset 1px 1px #fff, inset -1px -1px #424142, inset -2px -2px #848284; }

.watermark {
	position: absolute;
	left: 1280px;
	top: 597px;
	font: 16px/20px "Liberation Sans", sans-serif;
	color: #d8d6d8;
}

.marks { position: absolute; left: 0; top: 0; fill: #f41cf4; }
.frames { fill: none; stroke: #f41cf4; stroke-width: 3; }

/* letters inside the icons */
.t404 { font: 8.5px "DejaVu Sans", sans-serif; text-anchor: middle; }
.tcgi { font: bold 10px "DejaVu Sans", sans-serif; text-anchor: middle; fill: #fff; }
.tab { font: bold 12px "Liberation Serif", serif; text-anchor: middle; fill: #a42020; }
.tdav { font: 7.5px "DejaVu Sans", sans-serif; text-anchor: middle; }
.thelp { font: bold 11px "Liberation Sans", sans-serif; text-anchor: middle; fill: #fff; }
.tq { font: bold 8px "Liberation Sans", sans-serif; text-anchor: middle; fill: #2450b8; }
```
